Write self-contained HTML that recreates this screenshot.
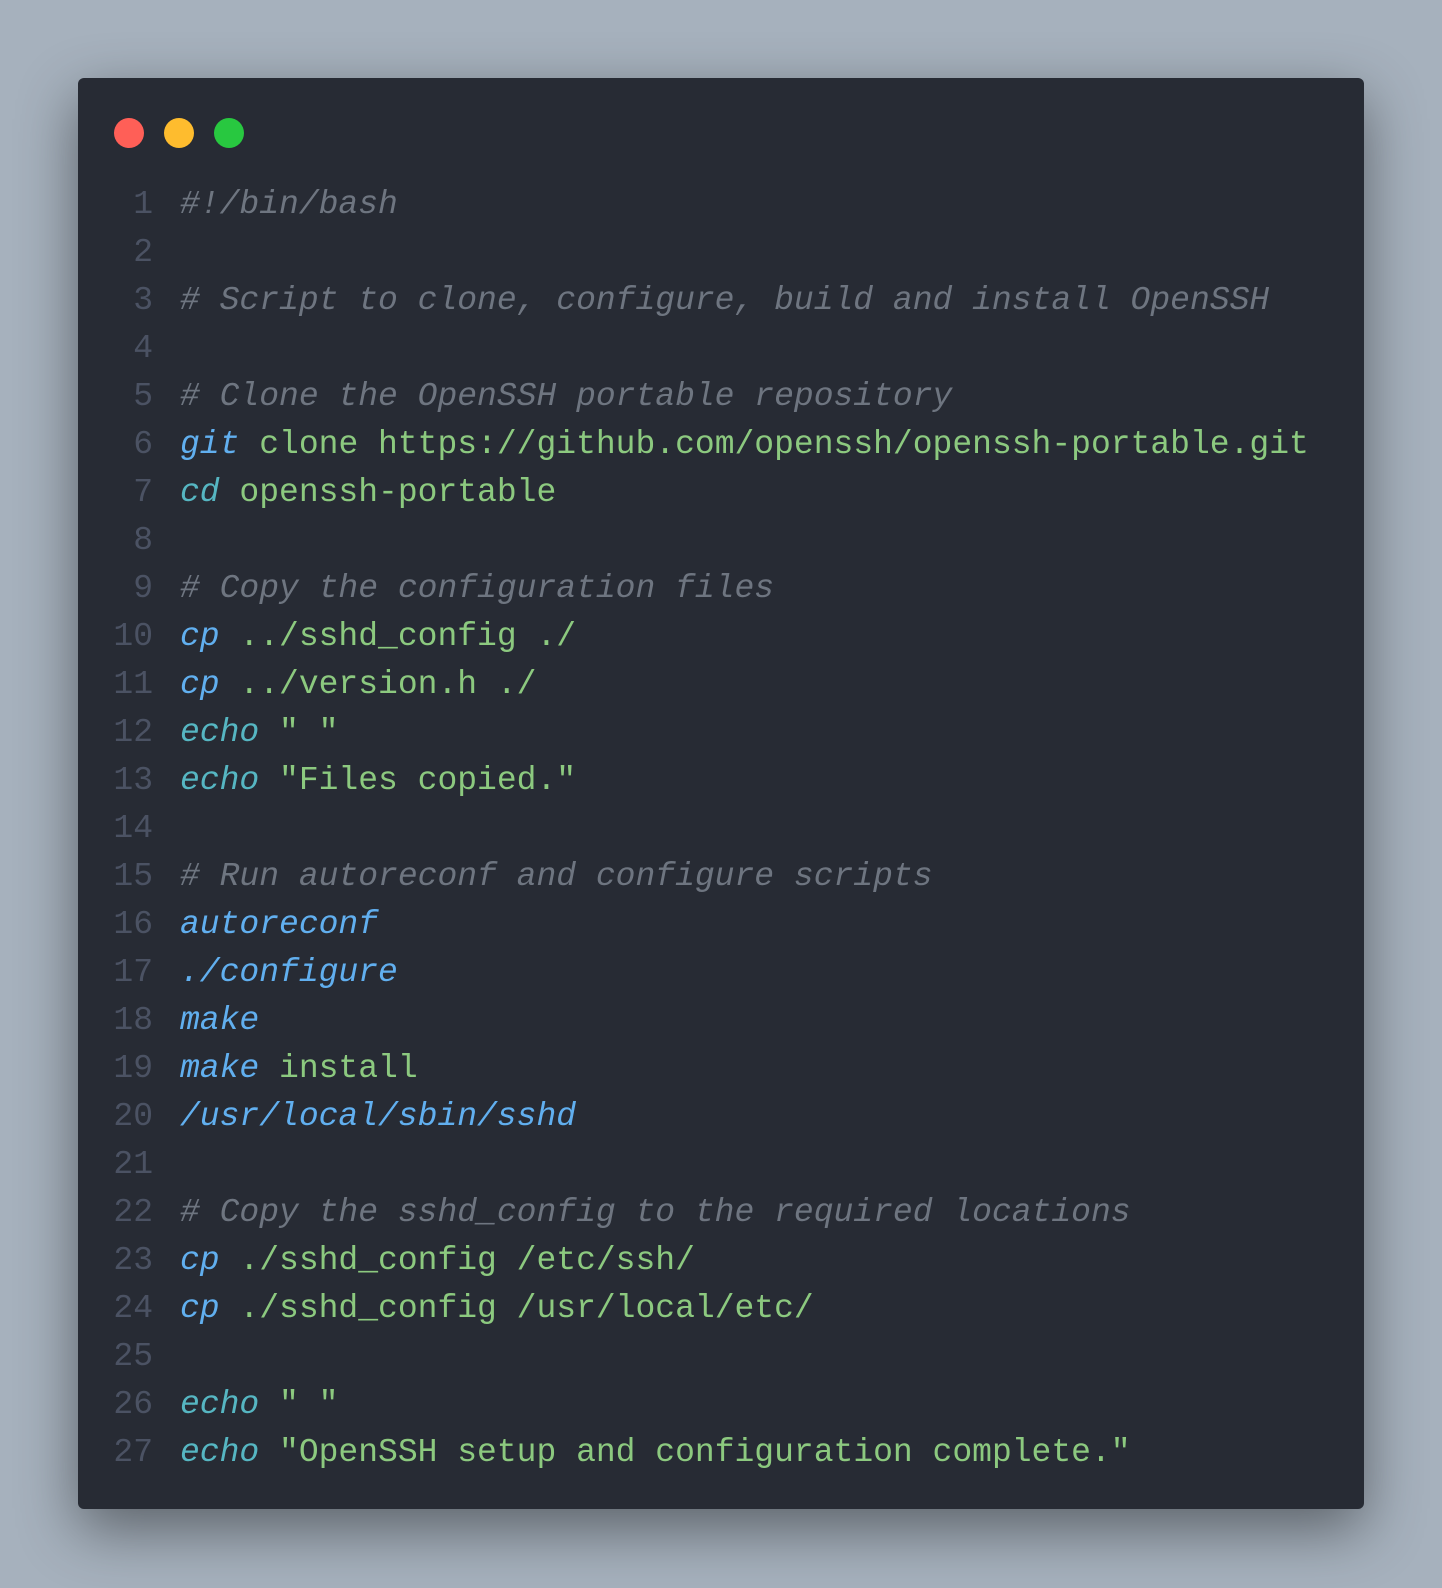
<!DOCTYPE html>
<html><head><meta charset="utf-8"><style>
html,body{margin:0;padding:0;}
body{width:1442px;height:1588px;background:#a6b1bd;position:relative;overflow:hidden;}
.card{position:absolute;left:78px;top:78px;width:1286px;height:1431px;background:#272b34;border-radius:6px;box-shadow:0 20px 60px rgba(0,0,0,0.45);}
.dot{position:absolute;top:118px;width:30px;height:30px;border-radius:50%;}
.code{position:absolute;left:78px;top:181px;font-family:"Liberation Mono",monospace;font-size:33px;line-height:48px;white-space:pre;}
.ln{display:inline-block;width:75px;text-align:right;color:#4b5263;margin-right:27px;}
.c{color:#6e7580;font-style:italic;}
.k{color:#61afef;font-style:italic;}
.e{color:#56b6c2;font-style:italic;}
.s{color:#8cc97f;}
</style></head><body>
<div class="card"></div>
<div class="dot" style="left:114px;background:#ff5f57"></div>
<div class="dot" style="left:164px;background:#febc2e"></div>
<div class="dot" style="left:214px;background:#28c840"></div>
<div class="code"><div><span class="ln">1</span><span class="c">#!/bin/bash</span></div><div><span class="ln">2</span></div><div><span class="ln">3</span><span class="c"># Script to clone, configure, build and install OpenSSH</span></div><div><span class="ln">4</span></div><div><span class="ln">5</span><span class="c"># Clone the OpenSSH portable repository</span></div><div><span class="ln">6</span><span class="k">git</span><span class="s"> clone https://github.com/openssh/openssh-portable.git</span></div><div><span class="ln">7</span><span class="e">cd</span><span class="s"> openssh-portable</span></div><div><span class="ln">8</span></div><div><span class="ln">9</span><span class="c"># Copy the configuration files</span></div><div><span class="ln">10</span><span class="k">cp</span><span class="s"> ../sshd_config ./</span></div><div><span class="ln">11</span><span class="k">cp</span><span class="s"> ../version.h ./</span></div><div><span class="ln">12</span><span class="e">echo</span><span class="s"> " "</span></div><div><span class="ln">13</span><span class="e">echo</span><span class="s"> "Files copied."</span></div><div><span class="ln">14</span></div><div><span class="ln">15</span><span class="c"># Run autoreconf and configure scripts</span></div><div><span class="ln">16</span><span class="k">autoreconf</span></div><div><span class="ln">17</span><span class="k">./configure</span></div><div><span class="ln">18</span><span class="k">make</span></div><div><span class="ln">19</span><span class="k">make</span><span class="s"> install</span></div><div><span class="ln">20</span><span class="k">/usr/local/sbin/sshd</span></div><div><span class="ln">21</span></div><div><span class="ln">22</span><span class="c"># Copy the sshd_config to the required locations</span></div><div><span class="ln">23</span><span class="k">cp</span><span class="s"> ./sshd_config /etc/ssh/</span></div><div><span class="ln">24</span><span class="k">cp</span><span class="s"> ./sshd_config /usr/local/etc/</span></div><div><span class="ln">25</span></div><div><span class="ln">26</span><span class="e">echo</span><span class="s"> " "</span></div><div><span class="ln">27</span><span class="e">echo</span><span class="s"> "OpenSSH setup and configuration complete."</span></div></div>
</body></html>
